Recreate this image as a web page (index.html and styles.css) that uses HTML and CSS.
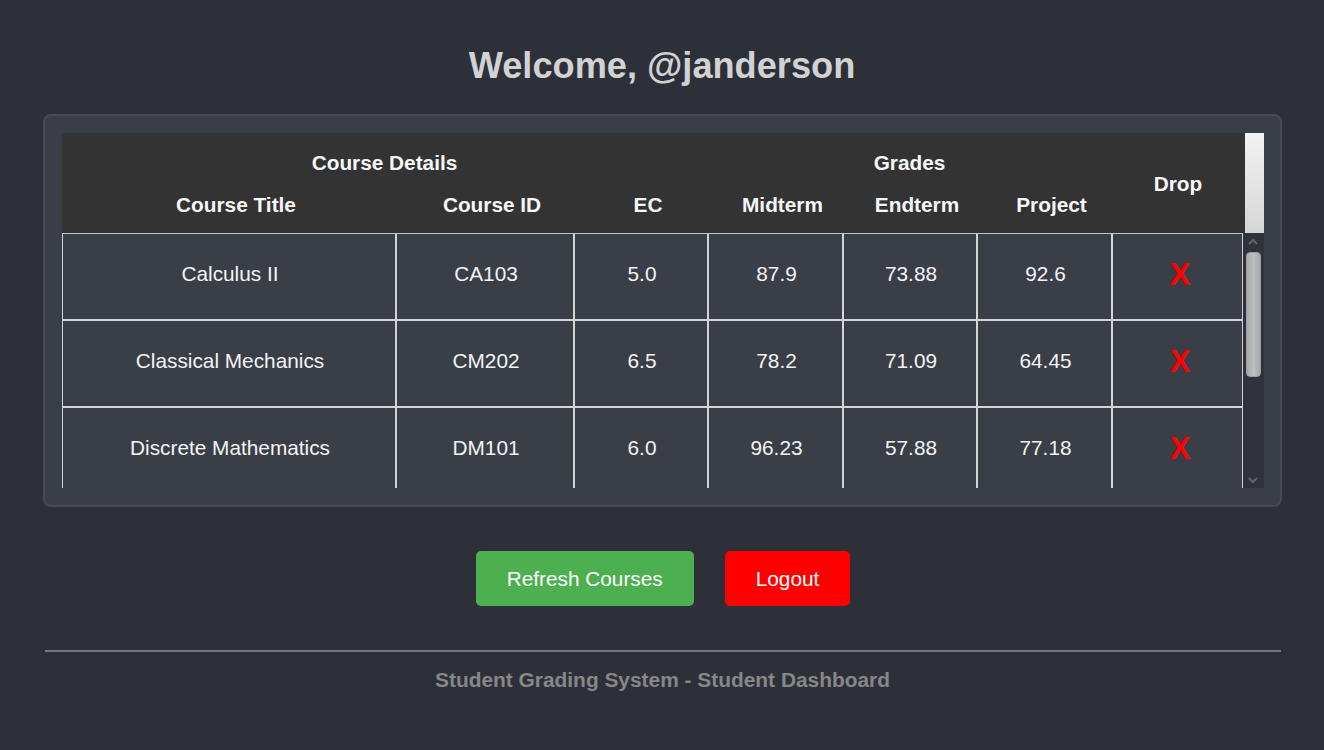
FILE: index.html
```html
<!DOCTYPE html>
<html lang="en">
<head>
<meta charset="utf-8">
<title>Student Dashboard</title>
<link rel="stylesheet" href="styles.css">
</head>
<body>
<div class="page">
  <h1 class="welcome">Welcome, @janderson</h1>

  <section class="card">
    <div class="head-row">
      <table class="grid head">
        <colgroup>
          <col class="c-title"><col class="c-id"><col class="c-ec"><col class="c-mid"><col class="c-end"><col class="c-proj"><col class="c-drop-h">
        </colgroup>
        <thead>
          <tr class="group">
            <th colspan="3">Course Details</th>
            <th colspan="3">Grades</th>
            <th rowspan="2" class="drop-h">Drop</th>
          </tr>
          <tr class="cols">
            <th>Course Title</th>
            <th>Course ID</th>
            <th>EC</th>
            <th>Midterm</th>
            <th>Endterm</th>
            <th>Project</th>
          </tr>
        </thead>
      </table>
      <div class="gutter"></div>
    </div>

    <div class="body-row">
      <div class="body-clip">
        <table class="grid rows">
          <colgroup>
            <col class="c-title"><col class="c-id"><col class="c-ec"><col class="c-mid"><col class="c-end"><col class="c-proj"><col class="c-drop">
          </colgroup>
          <tbody>
            <tr>
              <td>Calculus II</td><td>CA103</td><td>5.0</td><td>87.9</td><td>73.88</td><td>92.6</td>
              <td><span class="drop">X</span></td>
            </tr>
            <tr>
              <td>Classical Mechanics</td><td>CM202</td><td>6.5</td><td>78.2</td><td>71.09</td><td>64.45</td>
              <td><span class="drop">X</span></td>
            </tr>
            <tr>
              <td>Discrete Mathematics</td><td>DM101</td><td>6.0</td><td>96.23</td><td>57.88</td><td>77.18</td>
              <td><span class="drop">X</span></td>
            </tr>
          </tbody>
        </table>
      </div>
      <div class="scrollbar">
        <svg class="arrow" width="10" height="7" viewBox="0 0 10 7"><polyline points="1,6 5,2 9,6" fill="none" stroke="#60646d" stroke-width="2"/></svg>
        <div class="thumb"></div>
        <svg class="arrow down" width="10" height="7" viewBox="0 0 10 7"><polyline points="1,1 5,5 9,1" fill="none" stroke="#60646d" stroke-width="2"/></svg>
      </div>
    </div>
  </section>

  <div class="actions">
    <button class="btn refresh">Refresh Courses</button>
    <button class="btn logout">Logout</button>
  </div>

  <footer class="footer">
    <p>Student Grading System - Student Dashboard</p>
  </footer>
</div>
</body>
</html>
```

FILE: styles.css
```css
html, body {
  margin: 0;
  padding: 0;
  background: #2d3038;
}

body {
  font-family: "Liberation Sans", Arial, sans-serif;
  color: #f2f2f2;
}

.page {
  width: 1239px;
  margin: 0 auto;
  padding-top: 45px;
}

.welcome {
  margin: 0;
  font-size: 36.2px;
  line-height: 42px;
  font-weight: bold;
  text-align: center;
  color: #d2d2d2;
}

.card {
  margin-top: 27px;
  background: #3a3e47;
  border: 2px solid #474a52;
  border-radius: 8px;
  padding: 17px 16px 17px 17px;
}

.head-row,
.body-row {
  display: flex;
}

.grid {
  border-collapse: separate;
  border-spacing: 0;
  table-layout: fixed;
  font-size: 20.8px;
  line-height: 24px;
}

.head {
  width: 1183px;
  background: #333333;
  color: #f7f7f7;
}

.head th {
  font-weight: bold;
  text-align: center;
  padding: 0 6px;
}

.head .group th {
  padding-top: 18px;
  padding-bottom: 9px;
}

.head .group th.drop-h {
  padding-top: 10px;
  padding-bottom: 8px;
}

.head .cols th {
  padding: 9px 0 16px 15px;
}

.gutter {
  width: 19px;
  height: 100px;
  background: linear-gradient(#f2f2f2, #d6d6d6);
}

.c-title { width: 334px; }
.c-id { width: 178px; }
.c-ec { width: 134px; }
.c-mid { width: 135px; }
.c-end { width: 134px; }
.c-proj { width: 135px; }
.c-drop { width: 131px; }
.c-drop-h { width: 133px; }

.body-clip {
  width: 1181px;
  height: 255px;
  overflow: hidden;
}

.rows {
  width: 1181px;
}

.rows td {
  border: 1px solid #d2d5d6;
  padding: 28px 5px 33px 8px;
  text-align: center;
  color: #f4f4f4;
  background: #3a3e47;
}

.rows tr:first-child td {
  border-top-color: #b9c8c8;
}

.drop {
  display: block;
  color: #ff0000;
  font-weight: bold;
  font-size: 31px;
  line-height: 24px;
  padding: 1px 0 0 3px;
  margin-bottom: -1px;
}

.scrollbar {
  width: 21px;
  height: 255px;
  background: #30333b;
  display: flex;
  flex-direction: column;
  align-items: center;
  padding: 5px 0 4px;
  box-sizing: border-box;
}

.arrow {
  display: block;
  flex: none;
}

.arrow.down {
  margin-top: auto;
}

.thumb {
  margin-top: 7px;
  margin-left: 1px;
  width: 15px;
  height: 125px;
  box-sizing: border-box;
  border-radius: 4px;
  border: 1px solid #9c9da1;
  background: linear-gradient(90deg, #a9aaae, #bdbec2 50%, #a9aaae);
}

.actions {
  display: flex;
  justify-content: center;
  gap: 31px;
  margin-top: 44px;
  margin-left: 2px;
}

.btn {
  font-family: "Liberation Sans", Arial, sans-serif;
  font-size: 20.8px;
  line-height: 24px;
  padding: 15.5px 31px;
  border: none;
  border-radius: 5px;
  color: #ffffff;
  cursor: pointer;
}

.refresh {
  background: #4caf50;
}

.logout {
  background: #ff0000;
}

.footer {
  margin: 44px 1px 0 2px;
  border-top: 2px solid #74767b;
}

.footer p {
  margin: 16px 0 0;
  text-align: center;
  font-size: 20.9px;
  line-height: 24px;
  font-weight: bold;
  color: #878787;
}
```
